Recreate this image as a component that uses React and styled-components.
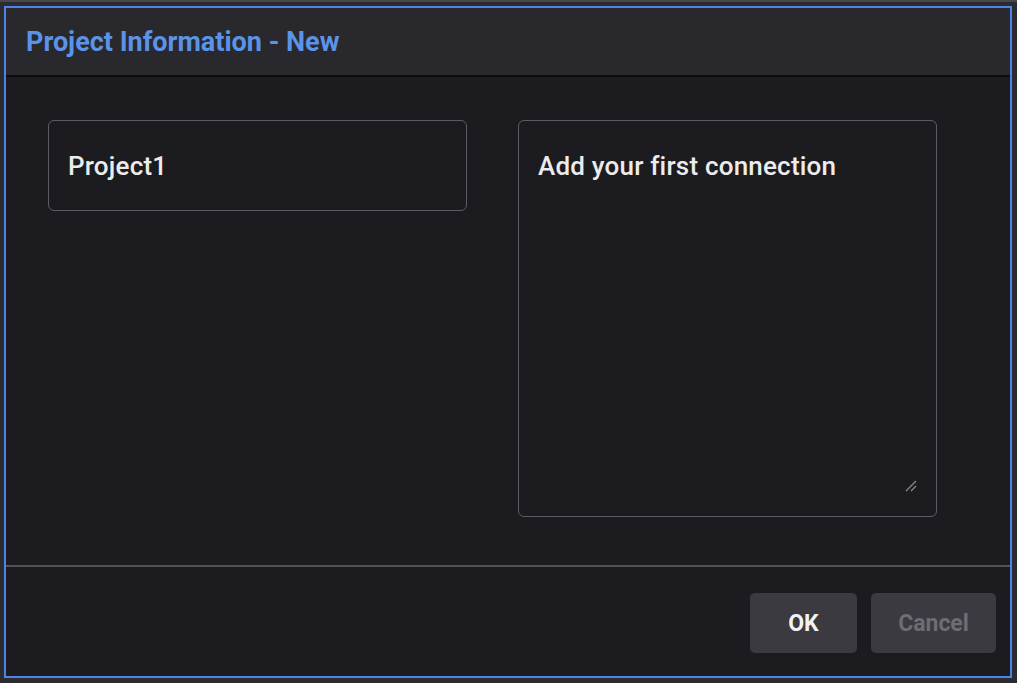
import styled, { createGlobalStyle } from "styled-components";

const GlobalStyle = createGlobalStyle`
  html, body {
    margin: 0;
    padding: 0;
    background: #2b2b30;
    font-family: Roboto, "Liberation Sans", sans-serif;
  }
`;

const Page = styled.div`
  width: 1017px;
  height: 683px;
  box-sizing: border-box;
  border-top: 2px solid #48484d;
  padding: 4px 0 0 4px;
  background: #2b2b30;
`;

const Dialog = styled.div`
  width: 1008px;
  height: 672px;
  box-sizing: border-box;
  border: 2px solid #4a86e8;
  background: #1c1c20;
  display: flex;
  flex-direction: column;
`;

const Header = styled.div`
  height: 69px;
  flex: none;
  box-sizing: border-box;
  background: #28282d;
  border-bottom: 2px solid #0c0c0e;
  display: flex;
  align-items: center;
  padding: 0 0 0 20px;
`;

const Title = styled.h1`
  margin: 0;
  font-size: 27px;
  font-weight: 700;
  color: #5b93e6;
`;

const Body = styled.div`
  flex: none;
  height: 488px;
  box-sizing: border-box;
  padding: 43px 0 0 42px;
  display: grid;
  grid-template-columns: 419px 419px;
  column-gap: 51px;
  align-items: start;
`;

const Field = styled.div`
  box-sizing: border-box;
  height: ${(p) => p.$height}px;
  border: 1px solid #5c5c62;
  border-radius: 6px;
  padding: ${(p) => (p.$multi ? "30px 19px" : "0 19px")};
  display: flex;
  align-items: ${(p) => (p.$multi ? "flex-start" : "center")};
  position: relative;
  font-size: 26px;
  font-weight: 500;
  letter-spacing: 0.2px;
  color: #ececec;
`;

const Grip = styled.svg`
  position: absolute;
  right: 19px;
  bottom: 24px;
`;

const Footer = styled.div`
  flex: 1;
  border-top: 2px solid #525257;
  display: flex;
  justify-content: flex-end;
  align-items: flex-start;
  gap: 14px;
  padding: 26px 14px 0 0;
`;

const Button = styled.button`
  height: 60px;
  width: ${(p) => p.$width}px;
  border: none;
  border-radius: 5px;
  background: #3a3a40;
  color: ${(p) => (p.$disabled ? "#6d6d73" : "#f2f2f2")};
  font-family: Roboto, "Liberation Sans", sans-serif;
  font-size: 23px;
  font-weight: 700;
  cursor: pointer;
`;

export default function App() {
  return (
    <>
      <GlobalStyle />
      <Page>
        <Dialog>
          <Header>
            <Title>Project Information - New</Title>
          </Header>
          <Body>
            <Field $height={91}>Project1</Field>
            <Field $height={397} $multi>
              Add your first connection
              <Grip width="12" height="12" viewBox="0 0 12 12">
                <path d="M1 11 L11 1 M6 11 L11 6" stroke="#8a8a8f" strokeWidth="1.2" />
              </Grip>
            </Field>
          </Body>
          <Footer>
            <Button $width={107}>OK</Button>
            <Button $width={125} $disabled>Cancel</Button>
          </Footer>
        </Dialog>
      </Page>
    </>
  );
}
